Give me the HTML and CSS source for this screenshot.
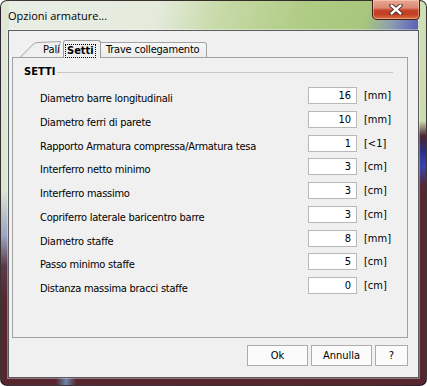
FILE: index.html
```html
<!DOCTYPE html>
<html>
<head>
<meta charset="utf-8">
<link rel="stylesheet" href="styles.css">
</head>
<body>
<div class="window">
  <div class="titlebar">
    <span class="title">Opzioni armature...</span>
    <div class="close">
      <svg width="14" height="11" viewBox="0 0 14 11">
        <path d="M2.5 1.5 L11.5 9.5 M11.5 1.5 L2.5 9.5" stroke="#3a1a14" stroke-width="4.2" stroke-linecap="round"/>
        <path d="M2.5 1.5 L11.5 9.5 M11.5 1.5 L2.5 9.5" stroke="#ffffff" stroke-width="2.4" stroke-linecap="round"/>
      </svg>
    </div>
  </div>
  <div class="client">
    <div class="tabs">
      <div class="tab tab-pali">
        <svg class="pali-shape" width="46" height="18" viewBox="0 0 46 18">
          <path d="M2 17.5 L15.5 4 Q17.5 2.5 20 2.5 L42.5 1.5 L39 14" fill="none" stroke="#a3a3a3" stroke-width="1"/>
        </svg>
        <span class="pali-text">Pali</span>
      </div>
      <div class="tab tab-active"><span class="focus">Setti</span></div>
      <div class="tab tab-trave">Trave collegamento</div>
    </div>
    <div class="panel">
      <div class="group-head"><span class="group-title">SETTI</span><span class="rule"></span></div>
      <div class="rows">
        <div class="row"><span class="label">Diametro barre longitudinali</span><span class="field">16</span><span class="unit">[mm]</span></div>
        <div class="row"><span class="label">Diametro ferri di parete</span><span class="field">10</span><span class="unit">[mm]</span></div>
        <div class="row"><span class="label">Rapporto Armatura compressa/Armatura tesa</span><span class="field">1</span><span class="unit">[&lt;1]</span></div>
        <div class="row"><span class="label">Interferro netto minimo</span><span class="field">3</span><span class="unit">[cm]</span></div>
        <div class="row"><span class="label">Interferro massimo</span><span class="field">3</span><span class="unit">[cm]</span></div>
        <div class="row"><span class="label">Copriferro laterale baricentro barre</span><span class="field">3</span><span class="unit">[cm]</span></div>
        <div class="row"><span class="label">Diametro staffe</span><span class="field">8</span><span class="unit">[mm]</span></div>
        <div class="row"><span class="label">Passo minimo staffe</span><span class="field">5</span><span class="unit">[cm]</span></div>
        <div class="row"><span class="label">Distanza massima bracci staffe</span><span class="field">0</span><span class="unit">[cm]</span></div>
      </div>
    </div>
    <div class="buttons">
      <div class="btn btn-ok">Ok</div>
      <div class="btn btn-cancel">Annulla</div>
      <div class="btn btn-help">?</div>
    </div>
  </div>
</div>
</body>
</html>
```

FILE: styles.css
```css
* { box-sizing: border-box; }
html, body { margin: 0; padding: 0; background: #ffffff; }
body { width: 427px; height: 386px; overflow: hidden; }

.window {
  width: 427px;
  height: 386px;
  border: 1px solid rgba(30, 20, 25, 0.85);
  border-radius: 7px;
  padding: 0 7px 7px 7px;
  display: flex;
  flex-direction: column;
  background:
    linear-gradient(to bottom, #dfe8d6 0px, #dde6d3 190px, #9aa3c4 235px, #5e3a4a 265px, #57262f 300px, #57262f 100%) left top / 8px 100% no-repeat,
    linear-gradient(to bottom, #cfe0b7 0px, #c9dcae 120px, #4a2530 135px, #2b2e86 150px, #3b44b0 165px, #582630 185px, #57262f 100%) right top / 8px 100% no-repeat,
    linear-gradient(to right, #57262f 0px, #57262f 55px, #6a86a8 65px, #57262f 75px, #57262f 100%) left bottom / 100% 8px no-repeat,
    linear-gradient(105deg, #e9eee5 0%, #e4ebdc 30%, #c7daa8 42%, #b0cc85 58%, #a8c67c 70%, #8d9fb0 75%, #5c64b8 80%, #7d87c4 84%, #c8dbb0 88%, #d5e4c3 100%);
  font-family: Tahoma, "DejaVu Sans Condensed", "Liberation Sans", sans-serif;
  font-size: 11px;
  color: #000;
}

.titlebar {
  height: 29px;
  display: flex;
  align-items: flex-start;
  justify-content: space-between;
  flex: none;
}
.title {
  font-family: "Segoe UI", "Open Sans", "Noto Sans", sans-serif;
  font-size: 11px;
  line-height: 16px;
  padding-top: 7px;
  color: #000;
}
.close {
  width: 48px;
  height: 20px;
  margin-top: -1px;
  margin-right: -1px;
  border: 1px solid #4a1c16;
  border-top: none;
  border-radius: 0 0 5px 5px;
  background: linear-gradient(to bottom, #e9a795 0%, #dc8a74 40%, #c4452a 55%, #c23f24 75%, #d7743f 100%);
  box-shadow: inset 0 0 0 1px rgba(255, 220, 200, 0.45);
  display: flex;
  align-items: center;
  justify-content: center;
}

.client {
  flex: 1;
  background: #f0f0f0;
  border: 1px solid rgba(40, 40, 50, 0.75);
  box-shadow: 0 0 0 1px rgba(255, 255, 255, 0.35);
  padding: 10px 10px 0 3px;
  display: flex;
  flex-direction: column;
}

.tabs {
  height: 17px;
  display: flex;
  align-items: flex-end;
  position: relative;
  z-index: 1;
  margin-bottom: -1px;
}
.tab {
  height: 17px;
  line-height: 15px;
}
.tab-pali {
  width: 45px;
  margin-left: 6px;
  display: flex;
  align-items: flex-end;
  position: relative;
}
.pali-shape {
  position: absolute;
  left: 0;
  top: -1px;
}
.pali-text {
  padding-left: 25px;
  padding-bottom: 1px;
  line-height: 15px;
  position: relative;
}
.tab-active {
  width: 38px;
  height: 18px;
  border: 1px solid #9a9a9a;
  border-bottom: none;
  border-radius: 3px 3px 0 0;
  background: #f0f0f0;
  padding: 2px 0 0 2px;
}
.focus {
  display: inline-block;
  font-weight: bold;
  outline: 1px dotted #000;
  line-height: 12px;
  padding: 0 1px 0 1px;
}
.tab-trave {
  width: 106px;
  height: 16px;
  border: 1px solid #a3a3a3;
  border-left: none;
  border-radius: 0 3px 0 0;
  background: linear-gradient(to bottom, #f7f7f7, #ececec);
  padding-left: 5px;
  line-height: 14px;
  letter-spacing: -0.2px;
}

.panel {
  height: 281px;
  flex: none;
  border: 1px solid #a0a0a0;
  background: #f0f0f0;
}
.group-head {
  display: flex;
  align-items: center;
  height: 14px;
  margin-top: 7px;
  padding-left: 11px;
  padding-right: 14px;
}
.group-title {
  font-weight: bold;
  line-height: 14px;
}
.rule {
  flex: 1;
  height: 1px;
  margin-left: 2px;
  background: #c6c6c6;
}

.rows {
  margin-top: 8px;
  padding-left: 27px;
  display: grid;
  grid-template-columns: 268px 49px auto;
  grid-auto-rows: 23.75px;
}
.row { display: contents; }
.label {
  padding-top: 5px;
  line-height: 13px;
  white-space: nowrap;
  letter-spacing: -0.25px;
}
.field {
  height: 17px;
  background: #fff;
  border: 1px solid #b8b8b8;
  text-align: right;
  padding-right: 5px;
  line-height: 15px;
}
.unit {
  padding-left: 7px;
  line-height: 17px;
}

.buttons {
  margin-top: 7px;
  display: flex;
  justify-content: flex-end;
  gap: 3px;
  padding-right: 0;
}
.btn {
  height: 21px;
  border: 1px solid #acacac;
  background: #fbfbfb;
  text-align: center;
  line-height: 19px;
}
.btn-ok, .btn-cancel { width: 61px; }
.btn-help { width: 33px; }
```
